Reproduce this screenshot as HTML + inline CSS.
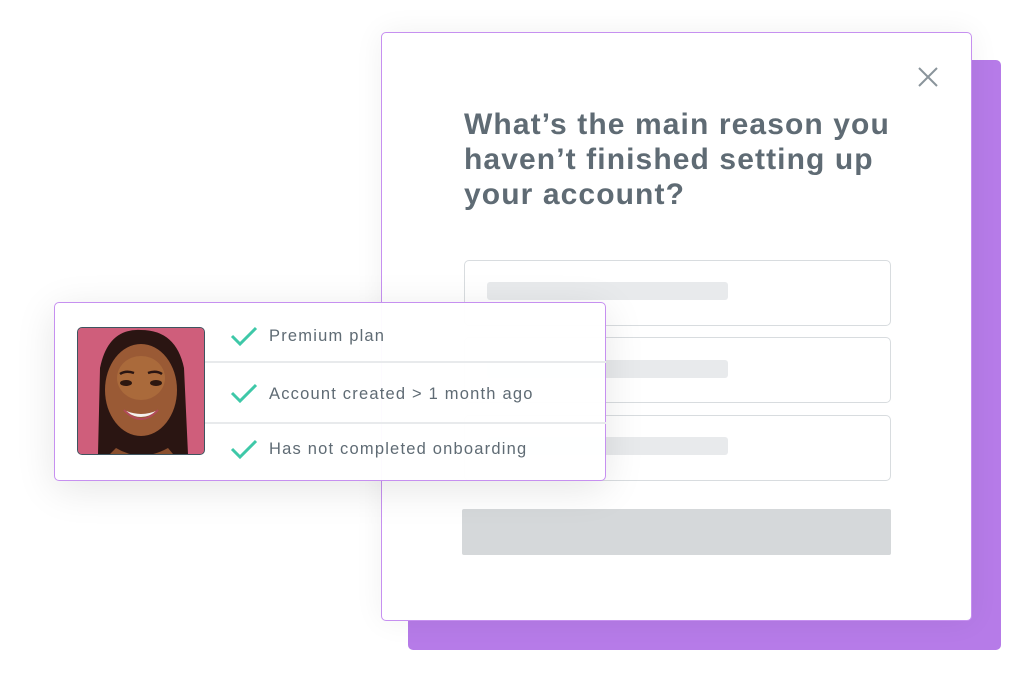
<!DOCTYPE html>
<html><head><style>
body{margin:0;width:1026px;height:696px;background:#fff;position:relative;overflow:hidden;font-family:"Liberation Sans",sans-serif;}
.abs{position:absolute;}
.back{left:408px;top:60px;width:593px;height:590px;background:#b67be8;border-radius:5px;}
.modal{left:381px;top:32px;width:589px;height:587px;background:#fff;border:1.5px solid #c690f0;border-radius:5px;box-shadow:0 0 30px rgba(0,0,0,0.06);}
h1{position:absolute;left:464px;top:107px;margin:0;font-size:30px;line-height:35px;font-weight:bold;color:#5f6b74;letter-spacing:1.1px;}
.field{left:464px;width:425px;height:64px;border:1.5px solid #d8dcdf;border-radius:5px;background:#fff;}
.ph{left:487px;width:241px;height:18px;background:#e8eaec;border-radius:3px;}
.btn{left:462px;top:509px;width:429px;height:46px;background:#d5d8da;border-radius:2px;}
.card{left:54px;top:302px;width:550px;height:177px;background:rgba(255,255,255,0.96);border:1.5px solid #c690f0;border-radius:5px;box-shadow:0 8px 40px rgba(0,0,0,0.10);}
.photo{left:77px;top:327px;width:126px;height:126px;border-radius:5px;border:1.5px solid #3e5560;overflow:hidden;background:#d05f7c;}
.row{left:269px;font-size:16.5px;color:#5f6b74;letter-spacing:1.2px;}
.sep{left:193px;width:413px;height:1.5px;background:#e8eaec;}
</style></head><body>
<div class="abs back"></div>
<div class="abs modal"></div>
<svg class="abs" style="left:916px;top:65px" width="24" height="24" viewBox="0 0 24 24"><path d="M3 3L21 21M21 3L3 21" stroke="#8a949b" stroke-width="2" fill="none"/></svg>
<h1>What’s the main reason you<br>haven’t finished setting up<br>your account?</h1>
<div class="abs field" style="top:260px"></div>
<div class="abs ph" style="top:282px"></div>
<div class="abs field" style="top:337px"></div>
<div class="abs ph" style="top:360px"></div>
<div class="abs field" style="top:415px"></div>
<div class="abs ph" style="top:437px"></div>
<div class="abs btn"></div>
<div class="abs card"></div>
<div class="abs sep" style="top:361px"></div>
<div class="abs sep" style="top:422px"></div>
<div class="abs photo">
<svg width="126" height="126" viewBox="0 0 126 126">
<rect width="126" height="126" fill="#cf5e7b"/>
<path d="M20 126 L22 40 Q30 0 63 2 Q98 2 106 40 L110 126Z" fill="#2a1512"/>
<ellipse cx="63" cy="62" rx="36" ry="46" fill="#9a5a35"/>
<ellipse cx="63" cy="50" rx="24" ry="22" fill="#b0703f" opacity="0.7"/>
<path d="M38 120 Q63 135 90 120 L95 126 L32 126Z" fill="#8a4f2e"/>
<ellipse cx="48" cy="55" rx="6" ry="3" fill="#2c1710"/>
<ellipse cx="78" cy="55" rx="6" ry="3" fill="#2c1710"/>
<path d="M42 46 Q48 42 56 45 M70 45 Q78 42 84 46" stroke="#2a1512" stroke-width="2.5" fill="none"/>
<path d="M46 82 Q63 96 80 82 Q63 90 46 82Z" fill="#f4f0ee"/>
<path d="M46 82 Q63 100 80 82" stroke="#b14a5a" stroke-width="2" fill="none"/>
</svg></div>
<svg class="abs" style="left:230px;top:325px" width="28" height="22" viewBox="0 0 28 22"><path d="M2 11L10 19L26 3" stroke="#3ec8a8" stroke-width="3" fill="none"/></svg>
<svg class="abs" style="left:230px;top:382px" width="28" height="22" viewBox="0 0 28 22"><path d="M2 11L10 19L26 3" stroke="#3ec8a8" stroke-width="3" fill="none"/></svg>
<svg class="abs" style="left:230px;top:438px" width="28" height="22" viewBox="0 0 28 22"><path d="M2 11L10 19L26 3" stroke="#3ec8a8" stroke-width="3" fill="none"/></svg>
<div class="abs row" style="top:327px">Premium plan</div>
<div class="abs row" style="top:385px">Account created &gt; 1 month ago</div>
<div class="abs row" style="top:440px">Has not completed onboarding</div>
</body></html>
